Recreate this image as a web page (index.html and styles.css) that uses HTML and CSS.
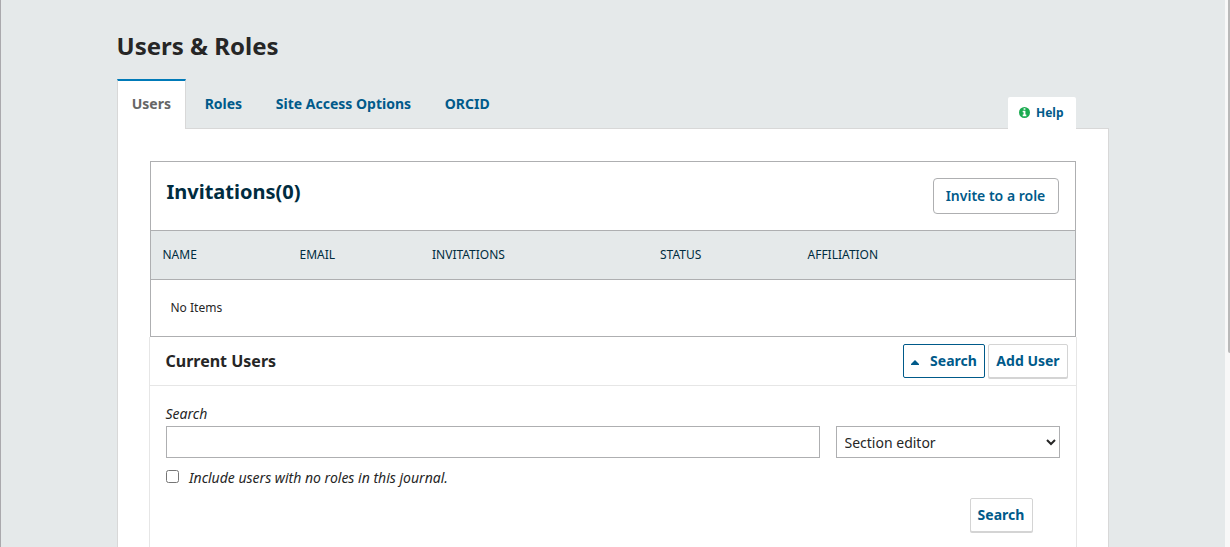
FILE: index.html
```html
<!DOCTYPE html>
<html lang="en">
<head>
<meta charset="utf-8">
<title>Users &amp; Roles</title>
<link rel="stylesheet" href="styles.css">
</head>
<body>
<div class="app">
  <main class="page">
    <h1 class="page-title">Users &amp; Roles</h1>
    <div class="tab-bar">
      <nav class="tabs">
        <a class="tab tab-active">Users</a>
        <a class="tab">Roles</a>
        <a class="tab">Site Access Options</a>
        <a class="tab">ORCID</a>
      </nav>
      <a class="help">
        <svg class="help-icon" viewBox="0 0 1536 1536"><path fill="#1aab50" fill-rule="evenodd" d="M768 0a768 768 0 1 0 0 1536a768 768 0 1 0 0-1536zM1024 1248q0 32-32 32H544q-32 0-32-32v-160q0-32 32-32h96V736h-96q-32 0-32-32V544q0-32 32-32h320q32 0 32 32v512h96q32 0 32 32zM896 352q0 32-32 32H672q-32 0-32-32V192q0-32 32-32h192q32 0 32 32z"/></svg>
        <span>Help</span>
      </a>
    </div>
    <div class="panel">
      <section class="invitations">
        <header class="inv-head">
          <h2 class="inv-title">Invitations(0)</h2>
          <button class="invite">Invite to a role</button>
        </header>
        <div class="columns">
          <span>NAME</span><span>EMAIL</span><span>INVITATIONS</span><span>STATUS</span><span>AFFILIATION</span>
        </div>
        <div class="empty">No Items</div>
      </section>
      <section class="users">
        <header class="users-head">
          <h3 class="users-title">Current Users</h3>
          <div class="actions">
            <button class="btn btn-open"><svg class="caret" viewBox="0 0 8 5"><path fill="#005a8a" d="M4 0L8 4V5H0V4z"/></svg>Search</button>
            <button class="btn btn-add">Add User</button>
          </div>
        </header>
        <form class="search-form">
          <label class="label" for="q">Search</label>
          <div class="fields">
            <input class="query" id="q" type="text">
            <select class="role"><option>Section editor</option></select>
          </div>
          <label class="check"><input class="check-box" type="checkbox"><span>Include users with no roles in this journal.</span></label>
          <div class="submit"><button class="btn btn-submit" type="button">Search</button></div>
        </form>
      </section>
    </div>
  </main>
  <div class="scrollbar"><div class="thumb"></div></div>
</div>
</body>
</html>
```
FILE: styles.css
```css
* { box-sizing: border-box; }
body {
  margin: 0;
  font: 14px/20px "Noto Sans", sans-serif;
  color: #262626;
}
h1, h2, h3 { margin: 0; }
button, input, select { font: inherit; margin: 0; }
.app {
  display: flex;
  justify-content: space-between;
  height: 547px;
  overflow: hidden;
  background: #e5e9ea;
  border-left: 1px solid #aaa9ad;
}
.page { width: 992px; margin-left: 116px; padding-top: 28px; }
.page-title { margin: 0 0 15px -0.5px; font-size: 24px; line-height: 36px; }
.tab-bar {
  display: flex;
  justify-content: space-between;
  align-items: flex-end;
  height: 50px;
  margin-bottom: -1px;
  padding-right: 33px;
  position: relative;
}
.tabs { display: flex; gap: 4px; height: 50px; }
.tab {
  padding: 15px 14px 0 13.7px;
  border: solid transparent;
  border-width: 0 1px;
  font-weight: 700;
  color: #005a8a;
}
.tab-active {
  padding-top: 13px;
  border-color: #d8d8d8;
  border-top: 2px solid #007ab8;
  background: #fff;
  color: #666;
}
.help {
  display: flex;
  align-items: center;
  gap: 6px;
  width: 68px;
  height: 32px;
  padding-left: 11px;
  border-radius: 2px 2px 0 0;
  background: #fff;
  font-size: 12px;
  font-weight: 700;
  color: #005a8a;
}
.help-icon { width: 11px; height: 11px; margin-bottom: 1px; }
.panel {
  height: 600px;
  padding: 32px 31px 0;
  border: 1px solid #d8d8d8;
  background: #fff;
}
.invitations { margin: 0 1px; border: 1px solid #aeafb1; }
.inv-head {
  display: flex;
  justify-content: space-between;
  height: 68px;
  padding: 16px 16px 0 15.5px;
}
.inv-title { font-size: 20px; line-height: 28px; color: #002c40; }
.invite {
  width: 126px;
  height: 36px;
  padding: 0 1px 0 0;
  border: 1px solid #aeafb1;
  border-radius: 4px;
  background: #fff;
  font-weight: 600;
  color: #005a8a;
}
.columns {
  display: grid;
  grid-template-columns: 137px 132.5px 228px 147.5px 1fr;
  align-items: center;
  height: 50px;
  padding-left: 11.5px;
  border: solid #aeafb1;
  border-width: 1px 0;
  background: #e5e9ea;
  font-size: 12px;
  color: #002c40;
}
.empty { height: 56px; padding: 18px 19.5px; font-size: 12px; }
.users { height: 300px; border: solid #e6e6e6; border-width: 0 1px; }
.users-head {
  display: flex;
  justify-content: space-between;
  height: 49px;
  padding: 7px 8px 0 15.5px;
  border-bottom: 1px solid #e6e6e6;
}
.users-title { font-size: 16px; line-height: 34px; }
.actions { display: flex; gap: 3px; }
.btn {
  height: 34px;
  padding: 0 7px;
  border: 1px solid #d4d4d4;
  border-radius: 2px;
  background: #fff;
  box-shadow: 0 1px 0 #d4d4d4;
  font-weight: 700;
  line-height: 32px;
  color: #005a8a;
}
.btn-add { width: 80px; }
.btn-open { width: 82px; border-color: #005a8a; box-shadow: none; }
.btn-submit { width: 63px; padding: 0 7px 0 6px; }
.caret { width: 8px; height: 5px; margin-right: 11px; vertical-align: 1px; }
.search-form { padding: 18px 16px 0; }
.label { display: block; height: 22px; margin-left: -0.5px; font-style: italic; }
.fields { display: flex; gap: 16px; }
.query, .role {
  height: 32px;
  border: 1px solid #aeafb1;
  border-radius: 0;
  background: #fff;
  color: #262626;
}
.query { width: 654px; }
.role { width: 224px; padding-left: 3.5px; }
.check { display: flex; gap: 10px; margin-top: 10px; font-style: italic; }
.check-box { width: 13px; height: 13px; margin-top: 2px; }
.submit { display: flex; justify-content: flex-end; margin-top: 10px; padding-right: 27px; }
.scrollbar {
  width: 5px;
  padding-left: 3px;
  background: #f8f8f8;
}
.thumb { height: 353px; background: #b9b9b9; border-radius: 0 0 0 2px; }
```
